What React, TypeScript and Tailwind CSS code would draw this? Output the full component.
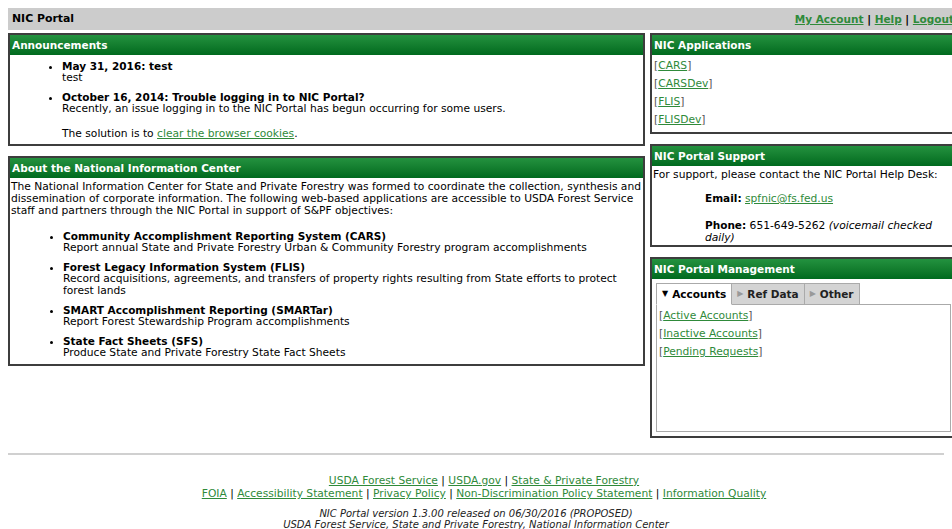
import React, { useState } from "react";

type Item = { title: string; body: React.ReactNode };

const announcements: Item[] = [
  { title: "May 31, 2016: test", body: "test" },
  {
    title: "October 16, 2014: Trouble logging in to NIC Portal?",
    body: (
      <>
        Recently, an issue logging in to the NIC Portal has begun occurring for some users.
        <br />
        <div className="h-[13px]" />
        The solution is to <A>clear the browser cookies</A>.
      </>
    ),
  },
];

const systems: Item[] = [
  {
    title: "Community Accomplishment Reporting System (CARS)",
    body: "Report annual State and Private Forestry Urban & Community Forestry program accomplishments",
  },
  {
    title: "Forest Legacy Information System (FLIS)",
    body: "Record acquisitions, agreements, and transfers of property rights resulting from State efforts to protect forest lands",
  },
  {
    title: "SMART Accomplishment Reporting (SMARTar)",
    body: "Report Forest Stewardship Program accomplishments",
  },
  {
    title: "State Fact Sheets (SFS)",
    body: "Produce State and Private Forestry State Fact Sheets",
  },
];

const apps = ["CARS", "CARSDev", "FLIS", "FLISDev"];

const tabs: { name: string; links: string[] }[] = [
  { name: "Accounts", links: ["Active Accounts", "Inactive Accounts", "Pending Requests"] },
  { name: "Ref Data", links: ["Regions", "States", "Agencies"] },
  { name: "Other", links: ["Announcements", "Settings"] },
];

function A({ children, bold }: { children: React.ReactNode; bold?: boolean }) {
  return (
    <a href="#" className={`text-[#2f8a3a] underline underline-offset-1 ${bold ? "font-bold" : ""}`}>
      {children}
    </a>
  );
}

function Panel({ title, children, className = "" }: { title: string; children: React.ReactNode; className?: string }) {
  return (
    <div className={`border-2 border-[#3d3d3d] bg-white ${className}`}>
      <div className="h-[20px] flex items-center px-[2px] bg-linear-to-b from-[#23923f] to-[#006a1e] text-white font-bold text-[10.5px]">
        {title}
      </div>
      {children}
    </div>
  );
}

function BulletList({ items, gap }: { items: Item[]; gap: string }) {
  return (
    <ul className={`list-disc pl-[52px] flex flex-col ${gap}`}>
      {items.map((it) => (
        <li key={it.title}>
          <div className="font-bold text-[10.5px] leading-[12px]">{it.title}</div>
          <div>{it.body}</div>
        </li>
      ))}
    </ul>
  );
}

export default function App() {
  const [tab, setTab] = useState(0);

  return (
    <div className="w-full h-[529px] overflow-hidden bg-white text-black font-['DejaVu_Sans',Verdana,sans-serif] text-[10.7px] leading-[12px]">
      <div className="w-[975px] px-2 pt-2">
        {/* top bar */}
        <div className="h-[22px] bg-[#cccccc] flex items-center justify-between px-[4px] font-bold">
          <span className="text-[10.9px]">NIC Portal</span>
          <span className="pr-[9px] text-[10.5px]">
            <A bold>My Account</A> | <A bold>Help</A> | <A bold>Logout</A>
          </span>
        </div>

        <div className="flex gap-[5px] mt-[3px]">
          {/* main column */}
          <div className="w-[637px] flex flex-col gap-[10px]">
            <Panel title="Announcements" className="h-[113px]">
              <div className="pt-[5px]">
                <BulletList items={announcements} gap="gap-[7px]" />
              </div>
            </Panel>

            <Panel title="About the National Information Center" className="h-[210px]">
              <div className="px-[1px] pt-[3px]">
                <p>
                  The National Information Center for State and Private Forestry was formed to coordinate the collection,
                  synthesis and dissemination of corporate information. The following web-based applications are accessible
                  to USDA Forest Service staff and partners through the NIC Portal in support of S&amp;PF objectives:
                </p>
                <div className="mt-[13px]">
                  <BulletList items={systems} gap="gap-[7px]" />
                </div>
              </div>
            </Panel>
          </div>

          {/* side column */}
          <div className="flex-1 flex flex-col gap-[10px]">
            <Panel title="NIC Applications" className="h-[101px]">
              <div className="px-[2px] pt-[5px] flex flex-col gap-[6px]">
                {apps.map((a) => (
                  <div key={a} className="text-[#555]">
                    [<A>{a}</A>]
                  </div>
                ))}
              </div>
            </Panel>

            <Panel title="NIC Portal Support" className="h-[103px]">
              <div className="px-[1px] pt-[3px]">
                <p>For support, please contact the NIC Portal Help Desk:</p>
                <div className="pl-[52px] w-[300px] mt-[11px] flex flex-col gap-[14px]">
                  <p>
                    <b className="text-[10.5px]">Email:</b> <A>spfnic@fs.fed.us</A>
                  </p>
                  <p>
                    <b className="text-[10.5px]">Phone:</b> 651-649-5262 <i>(voicemail checked</i> <i>daily)</i>
                  </p>
                </div>
              </div>
            </Panel>

            <Panel title="NIC Portal Management" className="h-[181px]">
              <div className="pl-[4px] pr-[14px] pt-[4px]">
                <div className="flex">
                  {tabs.map((t, i) => (
                    <button
                      key={t.name}
                      onClick={() => setTab(i)}
                      className={`h-[22px] px-[5px] flex items-center gap-[4px] border border-[#aaa] font-bold text-[10.5px] ${
                        i === tab ? "bg-white border-b-white relative z-10" : "bg-[#d4d4d4] text-[#222]"
                      } ${i > 0 ? "-ml-px" : ""}`}
                    >
                      <span className={`text-[8px] ${i === tab ? "text-black" : "text-[#999]"}`}>{i === tab ? "▼" : "▶"}</span>
                      {t.name}
                    </button>
                  ))}
                </div>
                <div className="-mt-px border border-[#aaa] h-[128px] px-[2px] pt-[5px] flex flex-col gap-[6px]">
                  {tabs[tab].links.map((l) => (
                    <div key={l} className="text-[#555]">
                      [<A>{l}</A>]
                    </div>
                  ))}
                </div>
              </div>
            </Panel>
          </div>
        </div>
      </div>

      {/* footer */}
      <div className="mt-[15px] mx-2 border-t-2 border-[#d0d0d0] w-[936px] text-center pt-[20px]">
        <div className="pl-[16px] flex flex-col gap-[1px]">
          <div>
            <A>USDA Forest Service</A> | <A>USDA.gov</A> | <A>State &amp; Private Forestry</A>
          </div>
          <div>
            <A>FOIA</A> | <A>Accessibility Statement</A> | <A>Privacy Policy</A> |{" "}
            <A>Non-Discrimination Policy Statement</A> | <A>Information Quality</A>
          </div>
        </div>
        <div className="mt-[8px] italic text-[#222] text-[10px] leading-[11px]">
          <div>NIC Portal version 1.3.00 released on 06/30/2016 (PROPOSED)</div>
          <div>USDA Forest Service, State and Private Forestry, National Information Center</div>
        </div>
      </div>
    </div>
  );
}
